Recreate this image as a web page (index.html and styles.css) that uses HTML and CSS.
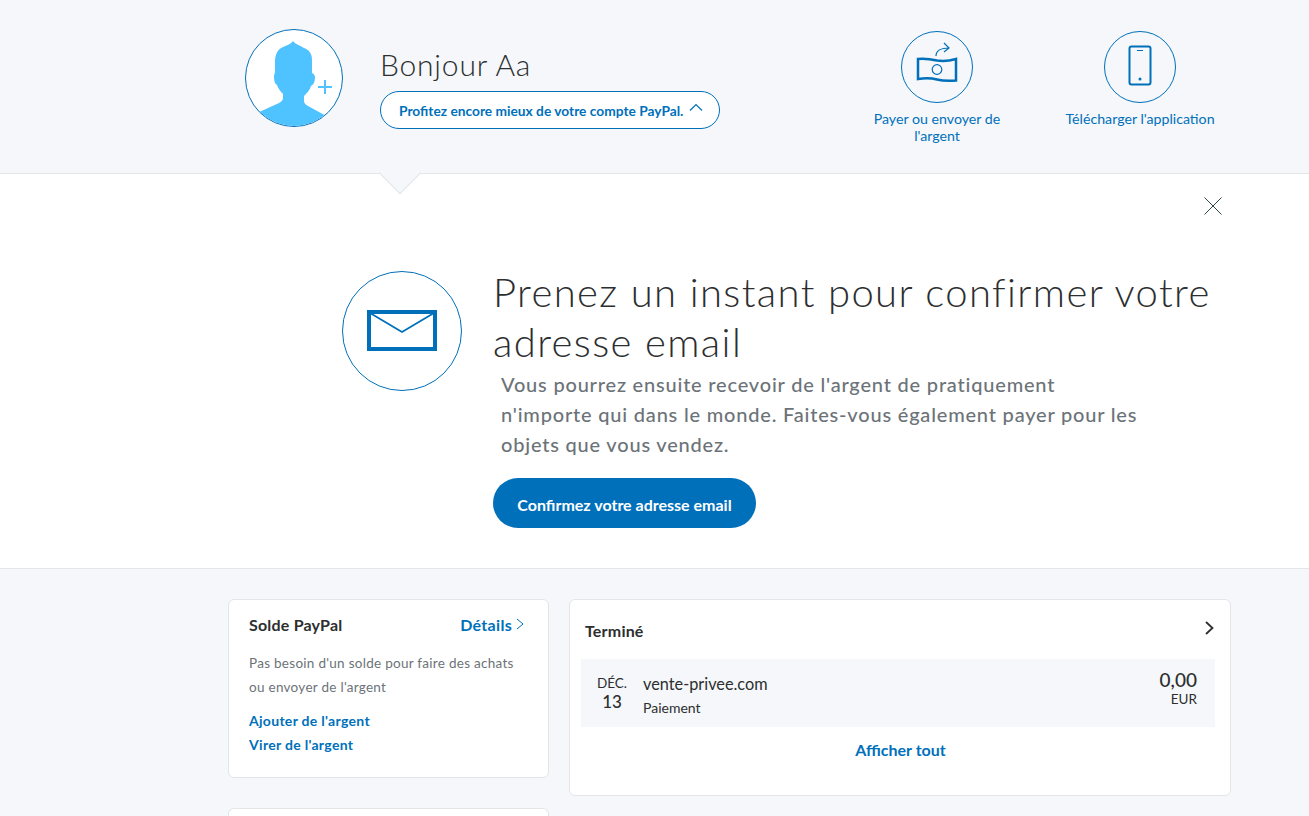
FILE: index.html
```html
<!DOCTYPE html>
<html lang="fr">
<head>
    <meta charset="UTF-8">
    <meta name="viewport" content="width=device-width, initial-scale=1.0">
    <title>PayPal</title>
    <link rel="stylesheet" href="styles.css">
</head>
<body>
    <header class="topBar">
        <div class="avatar">
            <svg viewBox="0 0 98 98" width="98" height="98">
                <defs><clipPath id="avatarClip"><circle cx="49" cy="49" r="48"/></clipPath></defs>
                <path clip-path="url(#avatarClip)" fill="#4fc3ff" d="M48 12c2 3 6 4 11 7 5 2 8 5 8 12v13c2 1 3 2 3 5 0 4-2 7-4 8-1 4-4 7-7 10v5c0 2 1 3 4 5l22 12v20H12V84l22-10c3-2 4-3 4-5v-4c-3-3-5-6-6-9-2-1-3-4-3-8 0-3 1-4 1-5V33c0-8 3-13 8-15 4-2 8-3 10-6z"/>
                <path d="M80 51v14M73 58h14" stroke="#4fc3ff" stroke-width="2" fill="none"/>
            </svg>
        </div>
        <div class="greeting">
            <h2 class="hello">Bonjour Aa</h2>
            <a class="pill" href="#">Profitez encore mieux de votre compte PayPal.
                <svg viewBox="0 0 14 8" width="14" height="8"><path d="M1 7.500L7 1.500l6 6" fill="none" stroke="#0070ba" stroke-width="1.200"/></svg>
            </a>
        </div>
        <nav class="actions">
            <a class="action" href="#">
                <span class="actionIcon">
                    <svg viewBox="0 0 72 72" width="72" height="72" fill="none" stroke="#0070ba">
                        <path d="M17 28c6-.5 12 0 19 1.500 6 1 12 .5 19-1.500v21.500c-7 .5-13 .5-19-1-6-1.500-12-1.500-19-.5z" stroke-width="2.500"/>
                        <circle cx="36" cy="38.500" r="4.800" stroke-width="1.200"/>
                        <path d="M35 25c0-5 5-8 13-8M43 12l5 5-5 4" stroke-width="1.200"/>
                    </svg>
                </span>
                <span>Payer ou envoyer de l'argent</span>
            </a>
            <a class="action" href="#">
                <span class="actionIcon">
                    <svg viewBox="0 0 72 72" width="72" height="72" fill="none" stroke="#0070ba">
                        <rect x="25.500" y="15.500" width="21" height="38" rx="2" stroke-width="2"/>
                        <path d="M33 19.500h6" stroke-width="1"/>
                        <circle cx="36" cy="48" r="1.500" fill="#0070ba" stroke="none"/>
                    </svg>
                </span>
                <span>Télécharger l'application</span>
            </a>
        </nav>
    </header>

    <section class="banner">
        <span class="notch"></span>
        <svg class="closeIcon" viewBox="0 0 18 18" width="18" height="18"><path d="M0.500 0.500l17 17M17.500 0.500l-17 17" stroke="#2c4a45" stroke-width="1" fill="none"/></svg>
        <div class="mailIcon">
            <svg viewBox="0 0 120 120" width="120" height="120" fill="none" stroke="#0070ba">
                <rect x="27" y="41" width="66" height="37" stroke-width="4"/>
                <path d="M28 42l32 19 32-19" stroke-width="1.800"/>
            </svg>
        </div>
        <div class="bannerText">
            <h1 class="bannerTitle">Prenez un instant pour confirmer votre adresse email</h1>
            <p class="bannerDesc">Vous pourrez ensuite recevoir de l'argent de pratiquement<br>n'importe qui dans le monde. Faites-vous également payer pour les<br>objets que vous vendez.</p>
            <a class="confirmButton" href="#">Confirmez votre adresse email</a>
        </div>
    </section>

    <main class="content">
        <div class="leftCol">
            <div class="card soldeCard">
                <div class="soldeHead">
                    <h3 class="cardTitle">Solde PayPal</h3>
                    <a class="detailsLink" href="#">Détails
                        <svg viewBox="0 0 8 12" width="8" height="12"><path d="M1 1l6 5-6 5" fill="none" stroke="#0070ba" stroke-width="1"/></svg>
                    </a>
                </div>
                <p class="soldeText">Pas besoin d'un solde pour faire des achats ou envoyer de l'argent</p>
                <a class="soldeLink" href="#">Ajouter de l'argent</a>
                <a class="soldeLink" href="#">Virer de l'argent</a>
            </div>
            <div class="card emptyCard"></div>
        </div>
        <div class="card doneCard">
            <div class="doneHead">
                <h3 class="cardTitle">Terminé</h3>
                <svg viewBox="0 0 9 14" width="9" height="14"><path d="M1 1l6.500 6-6.500 6" fill="none" stroke="#2c2e2f" stroke-width="1.800"/></svg>
            </div>
            <div class="txRow">
                <div class="txDate"><span>DÉC.</span><strong>13</strong></div>
                <div class="txInfo"><span class="txName">vente-privee.com</span><span class="txType">Paiement</span></div>
                <div class="txAmount"><span class="txValue">0,00</span><span class="txCur">EUR</span></div>
            </div>
            <a class="showAll" href="#">Afficher tout</a>
        </div>
    </main>
</body>
</html>
```

FILE: styles.css
```css
* {
    box-sizing: border-box;
}

html, body {
    height: 100%;
}

body {
    margin: 0;
    overflow: hidden;
    background: #f5f7fa;
    color: #2c2e2f;
    font-family: 'Lato', 'Open Sans', sans-serif;
}

a {
    color: #0070ba;
    text-decoration: none;
}

h1, h2, h3, p {
    margin: 0;
}

.topBar {
    display: flex;
    height: 174px;
    padding: 29px 94px 0 245px;
    border-bottom: 1px solid #e3e5e8;
}

.avatar {
    width: 98px;
    height: 98px;
    border: 1px solid #0070ba;
    border-radius: 50%;
    background: #fff;
    overflow: hidden;
    flex: none;
}

.avatar svg {
    display: block;
    margin: -1px;
}

.greeting {
    margin-left: 37px;
    padding-top: 16px;
}

.hello {
    font-size: 30px;
    font-weight: 300;
    line-height: 38px;
    letter-spacing: 0.800px;
}

.pill {
    display: flex;
    align-items: center;
    gap: 6px;
    width: 340px;
    height: 38px;
    margin-top: 8px;
    padding: 1px 0 0 18px;
    border: 1px solid #0070ba;
    border-radius: 19px;
    background: #fff;
    font-size: 13.750px;
    font-weight: 700;
    white-space: nowrap;
}

.pill svg {
    margin-bottom: 8px;
}

.actions {
    display: flex;
    gap: 53px;
    margin-left: auto;
    padding-top: 2px;
}

.action {
    display: flex;
    flex-direction: column;
    align-items: center;
    width: 150px;
    font-size: 14.200px;
    line-height: 17px;
    text-align: center;
}

.actionIcon {
    width: 72px;
    height: 72px;
    margin-bottom: 7px;
    border: 1px solid #0070ba;
    border-radius: 50%;
}

.actionIcon svg {
    display: block;
    margin: -1px;
}

.action span:last-child {
    max-width: 135px;
}

.action:last-child span:last-child {
    max-width: none;
    white-space: nowrap;
}

.banner {
    position: relative;
    display: flex;
    height: 395px;
    padding: 97px 0 0 342px;
    background: #fff;
    border-bottom: 1px solid #e3e5e8;
}

.notch {
    position: absolute;
    top: -16px;
    left: 385px;
    width: 30px;
    height: 30px;
    background: #f5f7fa;
    border-right: 1px solid #e3e5e8;
    border-bottom: 1px solid #e3e5e8;
    transform: rotate(45deg);
}

.closeIcon {
    position: absolute;
    top: 23px;
    left: 1204px;
}

.mailIcon {
    width: 120px;
    height: 120px;
    border: 1px solid #0070ba;
    border-radius: 50%;
    flex: none;
}

.mailIcon svg {
    display: block;
    margin: -1px;
}

.bannerText {
    width: 730px;
    margin-left: 31px;
}

.bannerTitle {
    font-size: 40px;
    font-weight: 300;
    line-height: 50px;
    letter-spacing: 1.380px;
    margin-top: -4px;
}

.bannerDesc {
    margin: 2px 0 19px 8px;
    color: #6c7378;
    font-size: 20px;
    font-weight: 500;
    line-height: 30px;
    letter-spacing: 0.800px;
    white-space: nowrap;
}

.confirmButton {
    display: flex;
    align-items: center;
    justify-content: center;
    width: 263px;
    height: 50px;
    padding-top: 3px;
    border-radius: 25px;
    background: #0070ba;
    color: #fff;
    font-size: 16px;
    font-weight: 700;
}

.content {
    display: flex;
    gap: 20px;
    padding: 30px 0 0 228px;
}

.leftCol {
    display: flex;
    flex-direction: column;
    gap: 30px;
    width: 321px;
}

.card {
    border: 1px solid #e3e5e8;
    border-radius: 6px;
    background: #fff;
}

.soldeCard {
    height: 179px;
    padding: 14px 24px 0 20px;
}

.emptyCard {
    height: 8px;
    border-bottom: none;
    border-radius: 6px 6px 0 0;
}

.soldeHead {
    display: flex;
    justify-content: space-between;
    align-items: center;
    height: 20px;
}

.cardTitle {
    font-size: 16px;
    font-weight: 700;
    letter-spacing: 0.200px;
}

.detailsLink {
    display: flex;
    align-items: center;
    gap: 4px;
    font-size: 16px;
    font-weight: 700;
    letter-spacing: 0.300px;
}

.soldeText {
    margin: 17px 0 10px;
    color: #6c7378;
    font-size: 13.500px;
    line-height: 24px;
    letter-spacing: 0.280px;
}

.soldeLink {
    display: block;
    font-size: 14px;
    font-weight: 700;
    line-height: 24px;
    letter-spacing: 0.300px;
}

.doneCard {
    width: 662px;
    height: 197px;
    padding: 0 15px 0 11px;
}

.doneHead {
    display: flex;
    justify-content: space-between;
    align-items: center;
    height: 59px;
    padding: 2px 1px 0 4px;
}

.doneHead svg {
    margin-bottom: 6px;
}

.txRow {
    display: flex;
    align-items: center;
    height: 68px;
    padding: 0 18px 0 16px;
    background: #f5f7fa;
}

.txDate {
    display: flex;
    flex-direction: column;
    align-items: center;
    width: 30px;
    font-size: 13.500px;
    line-height: 17px;
}

.txDate strong {
    font-size: 17px;
    font-weight: 500;
    line-height: 19px;
}

.txInfo {
    display: flex;
    flex-direction: column;
    margin: 6px 0 0 16px;
    flex: 1;
}

.txName {
    font-size: 16.300px;
    line-height: 24px;
}

.txType {
    font-size: 14px;
    line-height: 24px;
}

.txAmount {
    display: flex;
    flex-direction: column;
    align-items: flex-end;
    margin-bottom: 9px;
}

.txValue {
    font-size: 19px;
    font-weight: 500;
    line-height: 22px;
}

.txCur {
    font-size: 13.500px;
    line-height: 17px;
}

.showAll {
    display: block;
    margin-top: 13px;
    padding-left: 5px;
    font-size: 16px;
    font-weight: 700;
    line-height: 20px;
    text-align: center;
}
```
